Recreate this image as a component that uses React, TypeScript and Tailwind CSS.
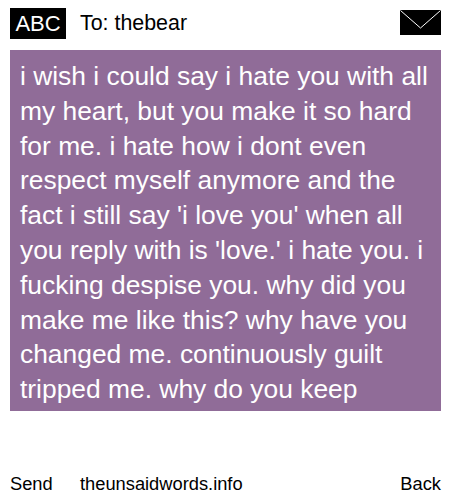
const message =
  "i wish i could say i hate you with all my heart, but you make it so hard for me. i hate how i dont even respect myself anymore and the fact i still say 'i love you' when all you reply with is 'love.' i hate you. i fucking despise you. why did you make me like this? why have you changed me. continuously guilt tripped me. why do you keep";

export default function App() {
  return (
    <div className="w-[450px] h-[500px] bg-white flex flex-col font-['Liberation_Sans',Arial,sans-serif] text-black overflow-hidden">
      <header className="h-[50px] pl-2.5 pr-[9px] pb-[11px] pt-2 flex items-center">
        <div className="w-14 h-[31px] bg-black text-white text-[22px] flex items-center justify-center">ABC</div>
        <span className="ml-3.5 text-[21.4px]">To: thebear</span>
        <svg className="ml-auto mb-0.5" width="41" height="25" viewBox="0 0 41 25">
          <rect width="41" height="25" fill="#000" />
          <path d="M0.5 0.5 L20.5 18 L40.5 0.5" fill="none" stroke="#fff" strokeWidth="1" />
        </svg>
      </header>
      <main className="ml-2.5 w-[431px] h-[361px] bg-[#906c98] text-white text-[26.4px] leading-[34.8px] px-2.5 pt-[9px] overflow-hidden">
        {message}
      </main>
      <footer className="mt-auto h-[36px] pl-2.5 pr-[9px] pt-1 flex items-center text-[18.3px]">
        <span className="w-[70px]">Send</span>
        <span>theunsaidwords.info</span>
        <span className="ml-auto">Back</span>
      </footer>
    </div>
  );
}
